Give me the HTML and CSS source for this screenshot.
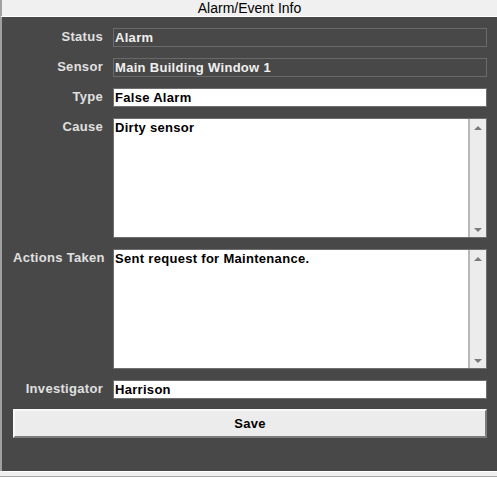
FILE: index.html
```html
<!DOCTYPE html>
<html lang="en">
<head>
    <meta charset="UTF-8">
    <title>Alarm/Event Info</title>
    <link rel="stylesheet" href="styles.css">
</head>
<body>
<div class="window">
    <div class="title">Alarm/Event Info</div>
    <div class="panel">
        <div class="form">
            <label class="label">Status</label>
            <div class="field readonly">Alarm</div>

            <label class="label">Sensor</label>
            <div class="field readonly">Main Building Window 1</div>

            <label class="label">Type</label>
            <div class="field">False Alarm</div>

            <label class="label">Cause</label>
            <div class="memo">
                <div class="memo-text">Dirty sensor</div>
                <div class="scroll">
                    <span class="arrow up"></span>
                    <span class="arrow down"></span>
                </div>
            </div>

            <label class="label">Actions Taken</label>
            <div class="memo">
                <div class="memo-text">Sent request for Maintenance.</div>
                <div class="scroll">
                    <span class="arrow up"></span>
                    <span class="arrow down"></span>
                </div>
            </div>

            <label class="label">Investigator</label>
            <div class="field">Harrison</div>
        </div>
        <button class="save">Save</button>
    </div>
    <div class="footer"></div>
</div>
</body>
</html>
```

FILE: styles.css
```css
* {
    margin: 0;
    padding: 0;
    box-sizing: border-box;
}

body {
    background-color: #f0f0f0;
    font-family: "Liberation Sans", Arial, sans-serif;
}

.window {
    width: 497px;
    height: 477px;
}

.title {
    height: 17px;
    line-height: 16px;
    background-color: #f0f0f0;
    border-left: 2px solid #a0a0a0;
    border-bottom: 1px solid #ffffff;
    text-align: center;
    font-size: 14px;
    color: #000;
}

.panel {
    height: 454px;
    background-color: #484848;
    border-left: 2px solid #a0a0a0;
    padding: 11px 10px 0 11px;
}

.form {
    display: grid;
    grid-template-columns: 90px 1fr;
    column-gap: 10px;
    row-gap: 11px;
}

.label {
    text-align: right;
    color: #e0e0e0;
    font-size: 13px;
    font-weight: bold;
    letter-spacing: 0.3px;
    line-height: 17px;
    white-space: nowrap;
}

.field {
    height: 19px;
    line-height: 17px;
    padding-left: 1px;
    font-size: 13px;
    font-weight: bold;
    letter-spacing: 0.3px;
    color: #000;
    background-color: #fff;
    border: 1px solid #6e6e6e;
}

.field.readonly {
    background-color: #484848;
    color: #f0f0f0;
    border-color: #6a6a6a;
}

.memo {
    height: 120px;
    display: flex;
    background-color: #fff;
    border: 1px solid #6e6e6e;
}

.memo-text {
    flex: 1;
    padding-left: 1px;
    font-size: 13px;
    font-weight: bold;
    letter-spacing: 0.3px;
    line-height: 17px;
    color: #000;
    border-right: 2px solid #b8b8b8;
}

.scroll {
    width: 16px;
    background-color: #ececec;
    display: flex;
    flex-direction: column;
    justify-content: space-between;
    align-items: center;
    padding: 7px 0 5px;
}

.arrow {
    width: 0;
    height: 0;
    border-left: 4px solid transparent;
    border-right: 4px solid transparent;
}

.arrow.up {
    border-bottom: 4px solid #7a7a7a;
}

.arrow.down {
    border-top: 4px solid #7a7a7a;
}

.save {
    display: block;
    width: 100%;
    height: 29px;
    margin-top: 10px;
    background-color: #ececec;
    border: 2px solid;
    border-color: #f8f8f8 #7c7c7c #7c7c7c #f8f8f8;
    font-family: "Liberation Sans", Arial, sans-serif;
    font-size: 13px;
    font-weight: bold;
    letter-spacing: 0.3px;
    color: #000;
}

.footer {
    height: 6px;
    border-top: 1px solid #ffffff;
    border-bottom: 1px solid #a8a8a8;
    background-color: #f0f0f0;
}
```
